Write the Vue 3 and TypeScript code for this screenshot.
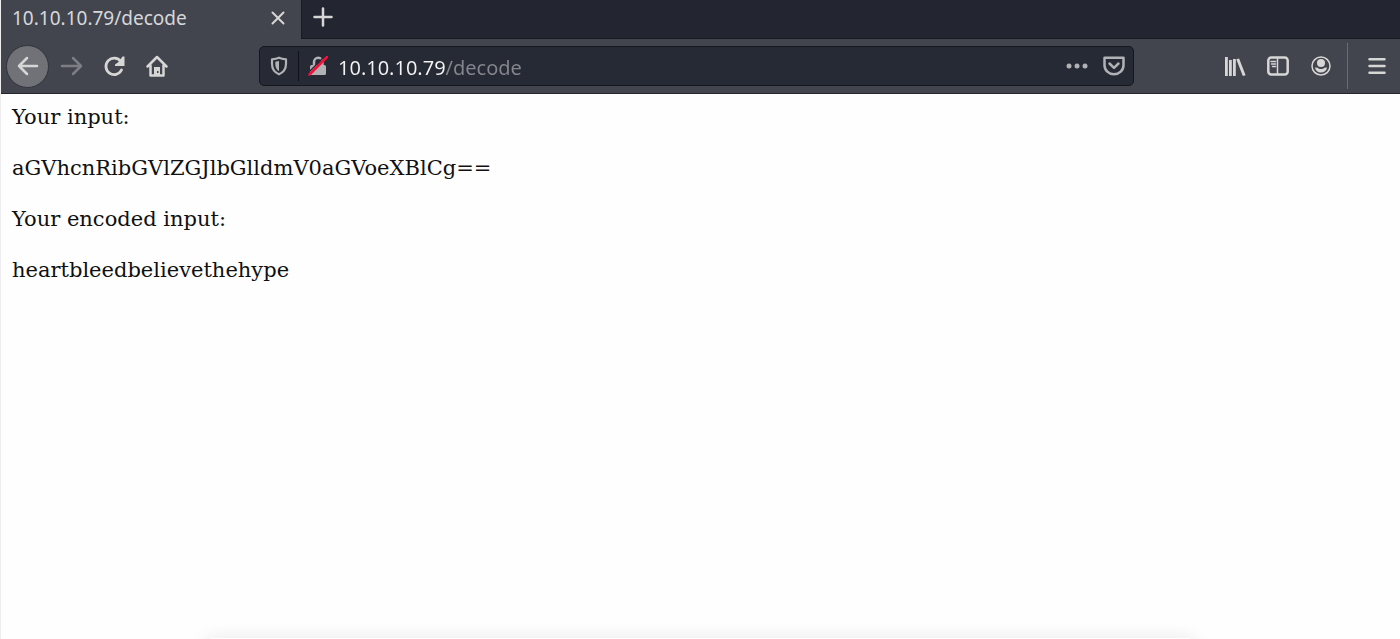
<script setup lang="ts">
import { ref } from 'vue'

const address = ref<string>('10.10.10.79/decode')
const lines: string[] = [
  'Your input:',
  'aGVhcnRibGVlZGJlbGlldmV0aGVoeXBlCg==',
  'Your encoded input:',
  'heartbleedbelievethehype',
]
</script>

<template>
  <div class="browser">
    <header class="tabs">
      <div class="tab">
        <span class="tab-title">{{ address }}</span>
        <button class="tab-close" aria-label="Close tab">
          <svg width="14" height="14" viewBox="0 0 14 14"><path d="M1.500 1.500l11 11M12.500 1.500l-11 11" /></svg>
        </button>
      </div>
      <button class="tab-new" aria-label="New tab">
        <svg width="20" height="20" viewBox="0 0 20 20"><path d="M10 1.500v17M1.500 10h17" /></svg>
      </button>
    </header>

    <nav class="toolbar" aria-label="Navigation">
      <div class="nav">
        <button class="back" aria-label="Back">
          <svg width="24" height="24" viewBox="0 0 24 24"><path d="M21 12H3M11 4l-8 8 8 8" /></svg>
        </button>
        <button class="tool forward" aria-label="Forward" disabled>
          <svg width="24" height="24" viewBox="0 0 24 24"><path d="M3 12h19M14 4l8 8-8 8" /></svg>
        </button>
        <button class="tool" aria-label="Reload">
          <svg width="24" height="24" viewBox="0 0 24 24">
            <path class="bold" d="M19.500 16a8.200 8.200 0 1 1-.8-8.600" />
            <path class="solid" d="M22.500 2.500v9.500h-9.500v-1.500l3.500-2.500 4-5.500z" />
          </svg>
        </button>
        <button class="tool" aria-label="Home">
          <svg width="24" height="24" viewBox="0 0 24 24">
            <path d="M2.500 12.500L12 3l9.500 9.500M5.500 11.500v10h13v-10" />
            <path class="solid" fill-rule="evenodd" d="M9 22v-9h6v9zM12 17h1.500v2H12z" />
          </svg>
        </button>
      </div>

      <div class="url-bar">
        <button class="shield" aria-label="Tracking protection">
          <svg width="18" height="20" viewBox="0 0 18 20">
            <path d="M9 1.700c2.200 1 4.400 1.400 7 1.600v4.500c0 4.900-2.500 8.600-7 10.500-4.500-1.900-7-5.600-7-10.500V3.300c2.600-.2 4.800-.6 7-1.600z" />
            <path class="solid" d="M9 5v10.300C6.500 13.700 5.300 11.200 5.300 8V5.800z" />
          </svg>
        </button>
        <button class="lock" aria-label="Connection is not secure">
          <svg width="20" height="20" viewBox="0 0 20 20">
            <path d="M6 9V6a4.200 4.200 0 0 1 8.400 0v3" />
            <rect class="solid" x="2" y="9" width="16" height="10" rx="1.500" />
            <path class="gap" d="M0 17L17 0" />
            <path class="slash" d="M1.500 18.500L19 1" />
          </svg>
        </button>
        <input v-model="address" class="address" type="text" aria-label="Address" spellcheck="false" />
        <button class="more" aria-label="Page actions">
          <svg width="22" height="6" viewBox="0 0 22 6">
            <circle cx="3" cy="3" r="2.500" /><circle cx="11" cy="3" r="2.500" /><circle cx="19" cy="3" r="2.500" />
          </svg>
        </button>
        <button class="pocket" aria-label="Save to Pocket">
          <svg width="22" height="20" viewBox="0 0 22 20">
            <path d="M1.500 1.700h19v7.500a9.500 9 0 0 1-19 0z" />
            <path d="M6.500 7.500l4.500 4.400 4.500-4.400" />
          </svg>
        </button>
      </div>

      <div class="extras">
        <button class="tool" aria-label="Library">
          <svg width="22" height="22" viewBox="0 0 22 22">
            <path class="solid" d="M1 2h2.800v19H1zM5 5h2.800v16H5zM9 4h2.800v17H9zM12.300 4.200l2.800-.8L21.600 20.200l-2.800.8z" />
          </svg>
        </button>
        <button class="tool" aria-label="Sidebar">
          <svg width="22" height="20" viewBox="0 0 22 20">
            <rect x="1.300" y="1.500" width="19.400" height="17" rx="3" />
            <path class="thin" d="M10.500 2v16M4 5.500h4.500M4.500 8h4M5.500 10.500h3" />
          </svg>
        </button>
        <button class="tool" aria-label="Account">
          <svg width="20" height="20" viewBox="0 0 20 20">
            <circle class="thin" cx="10" cy="10" r="9" />
            <circle class="solid" cx="10" cy="7" r="4" />
            <path class="solid" d="M4 11.700c1.300-.3 2.600.1 3.600.7 1.500.8 3.300.8 4.800 0 1-.6 2.300-1 3.600-.7-.6 2.800-2.900 4.800-6 4.800s-5.400-2-6-4.800z" />
          </svg>
        </button>
      </div>
      <div class="menu">
        <button class="tool" aria-label="Open menu">
          <svg width="18" height="18" viewBox="0 0 18 18"><path d="M1.500 2.200h15M1.500 9h15M1.500 15.800h15" /></svg>
        </button>
      </div>
    </nav>

    <main class="page">
      <p v-for="line in lines" :key="line">{{ line }}</p>
    </main>
    <div class="shade"></div>
  </div>
</template>

<style>
body {
  margin: 0;
  background: #fefefe;
}
</style>

<style scoped>
.browser {
  box-sizing: border-box;
  min-height: 100vh;
  display: flex;
  flex-direction: column;
  border-left: 1px solid #eeeef0;
  overflow: hidden;
  font-family: "Noto Sans", "Open Sans", sans-serif;
}

button {
  display: flex;
  align-items: center;
  justify-content: center;
  flex: none;
  padding: 0;
  border: 0;
  background: none;
  color: #d6d6d5;
}

svg {
  display: block;
  fill: none;
  stroke: currentColor;
  stroke-width: 2.5;
  stroke-linecap: round;
  stroke-linejoin: round;
}

.solid {
  fill: currentColor;
  stroke: none;
}

.thin {
  stroke-width: 1.5;
}

.bold {
  stroke-width: 2.8;
}

.tabs {
  display: flex;
  height: 39px;
  background: #232530;
  box-shadow: inset 0 -1px #181a22;
}

.tab {
  box-sizing: border-box;
  display: flex;
  align-items: center;
  justify-content: space-between;
  width: 301px;
  padding: 0 13px 4px 11px;
  border-right: 1px solid #181a22;
  background: #43454e;
}

.tab-title {
  color: #d6d7da;
  font-size: 19px;
  line-height: 26px;
}

.tab-close {
  width: 20px;
  height: 20px;
}

.tab-close svg {
  stroke-width: 2;
}

.tab-new {
  width: 42px;
  height: 34px;
}

.toolbar {
  box-sizing: border-box;
  display: flex;
  align-items: center;
  height: 55px;
  border-bottom: 1px solid #24262e;
  background: #43454e;
}

.nav {
  box-sizing: border-box;
  display: flex;
  align-items: center;
  width: 258px;
  padding-left: 5px;
}

.back {
  width: 43px;
  height: 43px;
  border: 1px solid #32343c;
  border-radius: 50%;
  background: #717278;
}

.tool {
  width: 43px;
  height: 43px;
}

.forward {
  color: #7d7e84;
}

.url-bar {
  box-sizing: border-box;
  display: flex;
  align-items: center;
  flex: 1;
  min-width: 0;
  height: 40px;
  border: 1px solid #15171d;
  border-radius: 5px;
  background: #262a34;
}

.url-bar button {
  color: #b1b2b5;
}

.url-bar .shield {
  width: 39px;
  height: 30px;
  border-right: 1px solid #101217;
}

.shield svg {
  stroke-width: 2.2;
}

.lock {
  width: 38px;
  height: 30px;
}

.gap {
  stroke: #262a34;
  stroke-width: 1.5;
}

.slash {
  stroke: #f5103a;
}

.address {
  flex: 1;
  min-width: 0;
  height: 32px;
  padding: 2px 1px 0;
  border: 0;
  outline: 0;
  background: linear-gradient(90deg, #f3f3f4 108px, #85868d 108px);
  background-clip: text;
  color: transparent;
  caret-color: #f3f3f4;
  font-family: inherit;
  font-size: 20px;
  line-height: 30px;
}

.more {
  width: 36px;
  height: 30px;
}

.more svg {
  fill: currentColor;
  stroke: none;
}

.pocket {
  width: 38px;
  height: 30px;
}

.extras {
  box-sizing: border-box;
  display: flex;
  justify-content: flex-end;
  width: 213px;
  padding-right: 5px;
}

.menu {
  box-sizing: border-box;
  display: flex;
  align-items: center;
  justify-content: flex-end;
  width: 53px;
  height: 46px;
  padding-right: 2px;
  border-left: 1px solid #6c6d73;
}

.page {
  flex: 1;
  padding: 10px 11px 0;
  color: #101010;
  font-family: "DejaVu Serif", serif;
  font-size: 21px;
  line-height: 26px;
}

.page p {
  margin: 0 0 25px;
  overflow-wrap: anywhere;
}

.shade {
  height: 1px;
  margin: 0 210px;
  box-shadow: 0 6px 18px 5px #0000001c;
}
</style>
